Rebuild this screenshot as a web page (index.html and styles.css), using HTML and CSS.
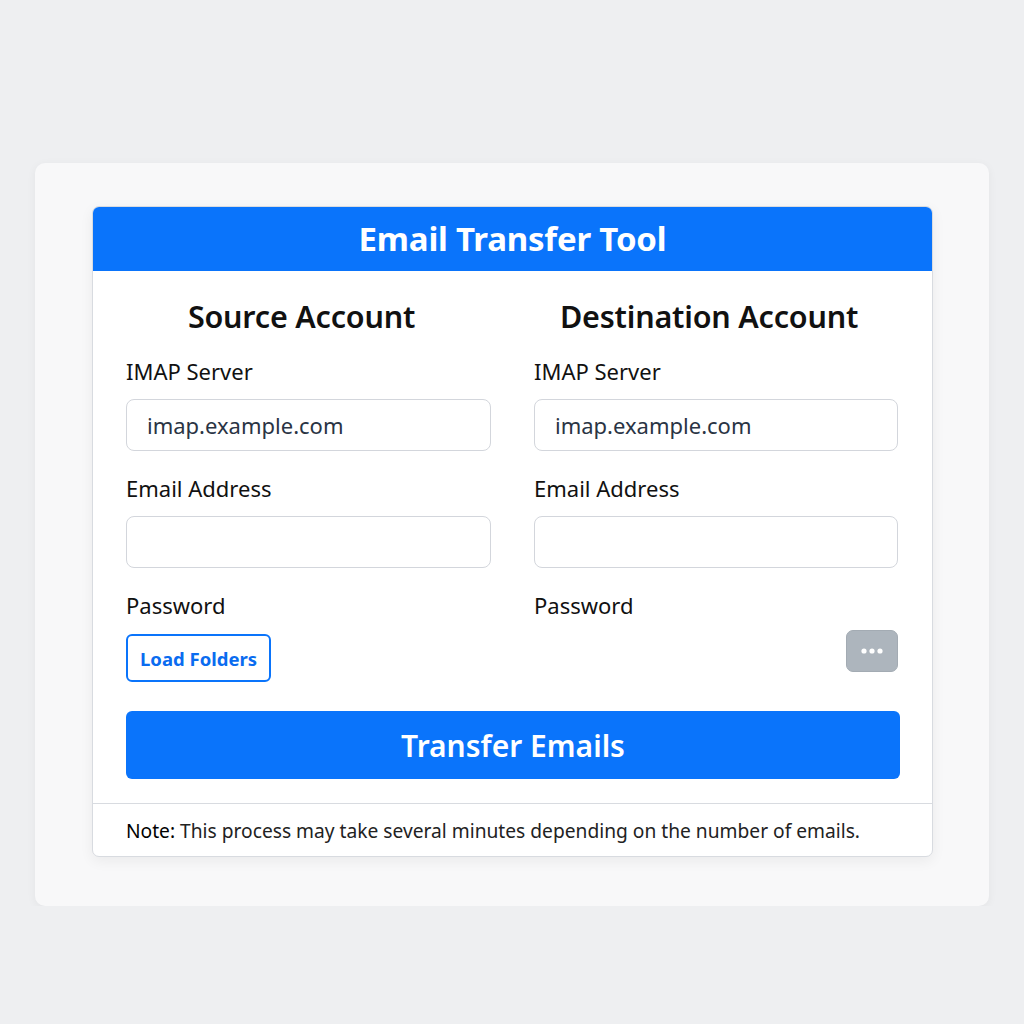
FILE: index.html
```html
<!DOCTYPE html>
<html lang="en">
<head>
<meta charset="UTF-8">
<meta name="viewport" content="width=device-width, initial-scale=1.0">
<title>Email Transfer Tool</title>
<link rel="stylesheet" href="styles.css">
</head>
<body>

<div class="panel">
  <div class="card">
    <div class="card-header">
      <h1>Email Transfer Tool</h1>
    </div>

    <div class="card-body">
      <div class="columns">
        <div class="account">
          <h2>Source Account</h2>
          <label for="srcServer">IMAP Server</label>
          <input type="text" id="srcServer" placeholder="imap.example.com">
          <label for="srcEmail">Email Address</label>
          <input type="email" id="srcEmail">
          <label for="srcPass">Password</label>
          <div class="actions">
            <button class="btn-outline" id="loadFolders">Load Folders</button>
          </div>
        </div>

        <div class="account">
          <h2>Destination Account</h2>
          <label for="dstServer">IMAP Server</label>
          <input type="text" id="dstServer" placeholder="imap.example.com">
          <label for="dstEmail">Email Address</label>
          <input type="email" id="dstEmail">
          <label for="dstPass">Password</label>
          <div class="actions actions-right">
            <button class="btn-more" aria-label="More">
              <svg width="24" height="8" viewBox="0 0 24 8">
                <circle cx="4" cy="4" r="2.6" fill="#fff"/>
                <circle cx="12" cy="4" r="2.6" fill="#fff"/>
                <circle cx="20" cy="4" r="2.6" fill="#fff"/>
              </svg>
            </button>
          </div>
        </div>
      </div>

      <button class="btn-primary" id="transfer">Transfer Emails</button>
    </div>

    <div class="card-footer">
      <span class="note">Note:</span> This process may take several minutes depending on the number of emails.
    </div>
  </div>
</div>

</body>
</html>
```

FILE: styles.css
```css
body {
  margin: 0;
  background: #eeeff1;
  font-family: "Noto Sans", "Open Sans", sans-serif;
  color: #111;
}

.panel {
  width: 954px;
  margin: 163px 0 0 35px;
  padding: 43px 0 49px 57px;
  box-sizing: border-box;
  background: #f8f8f9;
  border-radius: 10px;
  box-shadow: 0 2px 10px rgba(0, 0, 0, 0.05);
}

.card {
  width: 839px;
  background: #fff;
  border: 1px solid #d8dbe0;
  border-radius: 7px;
  box-shadow: 0 4px 14px rgba(0, 0, 0, 0.06);
  overflow: hidden;
}

.card-header {
  background: #0a74fb;
  height: 64px;
  display: flex;
  align-items: center;
  justify-content: center;
}

.card-header h1 {
  margin: 0;
  color: #fff;
  font-size: 33px;
  font-weight: 700;
  letter-spacing: -0.2px;
  padding-bottom: 2px;
}

.card-body {
  padding: 27px 32px 24px 33px;
  border-bottom: 1px solid #d8dbe0;
}

.columns {
  display: grid;
  grid-template-columns: 365px 364px;
  column-gap: 43px;
}

.account {
  display: flex;
  flex-direction: column;
}

.account h2 {
  margin: 0 0 21px;
  padding-right: 14px;
  text-align: center;
  font-size: 30.5px;
  font-weight: 600;
  line-height: 36px;
  letter-spacing: -0.2px;
}

.account label {
  font-size: 22px;
  line-height: 33px;
  margin-bottom: 11px;
}

.account input {
  height: 52px;
  box-sizing: border-box;
  border: 1px solid #d3d6dc;
  border-radius: 8px;
  padding: 0 20px;
  font-family: inherit;
  font-size: 22px;
  color: #2a3444;
  margin-bottom: 21px;
}

.account input::placeholder {
  color: #2a3444;
}

.actions {
  display: flex;
  margin-top: 1px;
}

.actions-right {
  justify-content: flex-end;
  margin-top: -3px;
}

.btn-outline {
  height: 48px;
  padding: 0 12px;
  background: #fff;
  border: 2px solid #0a74fb;
  border-radius: 6px;
  color: #0a6cf0;
  font-family: inherit;
  font-size: 18.5px;
  font-weight: 700;
}

.btn-more {
  width: 52px;
  height: 42px;
  background: #adb5bd;
  border: 1px solid #a3abb3;
  border-radius: 7px;
  display: flex;
  align-items: center;
  justify-content: center;
  padding: 0;
}

.btn-primary {
  display: block;
  width: 100%;
  height: 68px;
  margin-top: 29px;
  background: #0a74fb;
  border: none;
  border-radius: 6px;
  color: #fff;
  font-family: inherit;
  font-size: 30px;
  font-weight: 600;
}

.card-footer {
  height: 52px;
  display: flex;
  align-items: center;
  padding-left: 33px;
  font-size: 19.2px;
  color: #222;
}

.note {
  color: #000;
  margin-right: 5px;
}
```
